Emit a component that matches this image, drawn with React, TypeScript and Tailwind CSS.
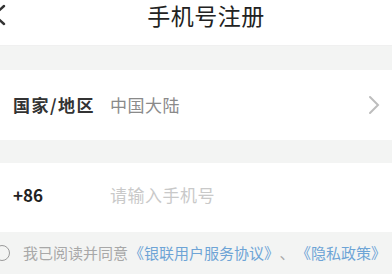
const font = { fontFamily: '"Noto Sans CJK SC", "Noto Sans", sans-serif' };

export default function App() {
  return (
    <div className="w-[392px] h-[274px] overflow-hidden bg-[#f3f4f3]" style={font}>
      {/* header */}
      <div className="relative h-[46px] bg-white flex items-start justify-center border-b border-[#f0f0f0]">
        <svg
          className="absolute left-[-9px] top-[4px]"
          width="16"
          height="22"
          viewBox="0 0 16 22"
          fill="none"
          stroke="#333"
          strokeWidth="2.4"
          strokeLinecap="round"
        >
          <path d="M13 2 L3 11 L13 20" />
        </svg>
        <h1 className="ml-[20px] text-[23px] leading-[30px] text-[#222] tracking-[0.5px]">手机号注册</h1>
      </div>

      <div className="h-[24px]" />

      {/* country row */}
      <div className="h-[70px] bg-white flex items-center pl-[13px] pr-[12px]">
        <span className="w-[97px] text-[17px] font-bold text-[#333] tracking-[1.5px]">国家/地区</span>
        <span className="flex-1 text-[17px] text-[#8a8a8a] tracking-[0.5px]">中国大陆</span>
        <svg width="12" height="20" viewBox="0 0 12 20" fill="none" stroke="#bdbdbd" strokeWidth="2" strokeLinecap="round">
          <path d="M2 2 L10 10 L2 18" />
        </svg>
      </div>

      <div className="h-[23px]" />

      {/* phone row */}
      <div className="h-[69px] bg-white flex items-center pl-[13px] pr-[12px]">
        <span className="w-[97px] text-[17px] font-semibold text-[#222] -mt-[5px]">+86</span>
        <input
          className="flex-1 text-[17px] text-[#333] placeholder:text-[#c9c9c9] outline-none bg-transparent tracking-[0.5px] -mt-[5px]"
          placeholder="请输入手机号"
          style={font}
        />
      </div>

      {/* agreement */}
      <div className="h-[42px] flex items-center -ml-[6px] text-[15px]">
        <span className="w-[16px] h-[16px] rounded-full border-[1.5px] border-[#9a9a9a] shrink-0" />
        <span className="ml-[13px] text-[#a8a8a8] whitespace-nowrap">
          我已阅读并同意
          <span className="text-[#6ea4d6] ml-[1px]">《银联用户服务协议》</span>
          <span className="ml-[8px]">、</span>
          <span className="text-[#6ea4d6] ml-[9px]">《隐私政策》</span>
        </span>
      </div>
    </div>
  );
}
